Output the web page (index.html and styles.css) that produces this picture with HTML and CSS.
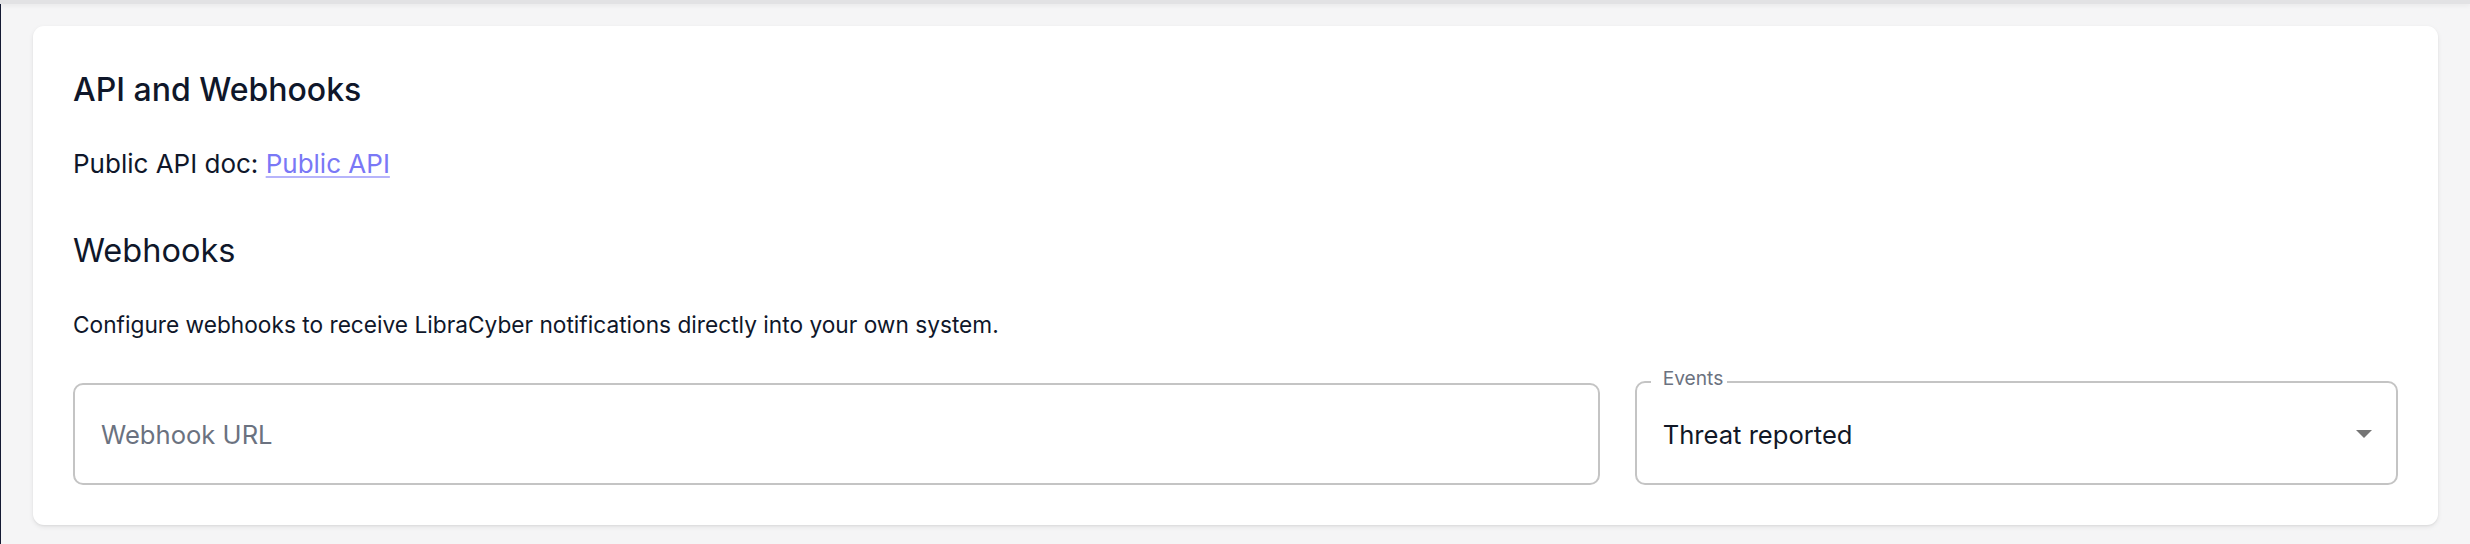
FILE: index.html
```html
<!DOCTYPE html>
<html lang="en">
<head>
  <meta charset="UTF-8" />
  <title>Settings - API and Webhooks</title>
  <meta name="viewport" content="width=device-width, initial-scale=1.0" />
  <link rel="stylesheet" href="styles.css">
</head>
<body>
  <div class="topbar"></div>
  <main class="main">
    <section class="card">
      <h1 class="card-title">API and Webhooks</h1>
      <p class="api-doc">Public API doc: <a href="#">Public API</a></p>

      <!-- webhooks -->
      <h2 class="section-title">Webhooks</h2>
      <p class="section-desc">Configure webhooks to receive LibraCyber notifications directly into your own system.</p>

      <div class="fields">
        <div class="field">
          <input type="text" placeholder="Webhook URL" />
        </div>
        <div class="field select">
          <fieldset><legend>Events</legend></fieldset>
          <span class="label">Events</span>
          <span class="value">Threat reported</span>
          <svg class="arrow" width="16" height="8" viewBox="0 0 16 8"><path d="M0 0h16L8 8z" fill="#757575"/></svg>
        </div>
      </div>
    </section>
  </main>
</body>
</html>
```

FILE: styles.css
```css
body { margin:0; background:#f5f5f6; font-family:Inter,'Noto Sans',sans-serif; color:#0f172a; }
.topbar { height:4px; background:#e2e2e4; box-shadow:0 2px 4px rgba(0,0,0,0.05); }
.main { border-left:1px solid #141a33; padding:22px 32px 40px 32px; min-height:500px; }

/* card */
.card { background:#fff; border-radius:11px; padding:40px 40px 40px 40px; box-shadow:0 2px 5px rgba(0,0,0,0.08), 0 1px 2px rgba(0,0,0,0.05); }
.card-title { margin:0; font-size:32px; line-height:48px; font-weight:500; }
.api-doc { margin:30px 0 0; font-size:26px; line-height:39px; }
.api-doc a { color:#7a78f6; text-decoration-color:#b6b4fb; text-underline-offset:3px; }
.section-title { margin:44px 0 0; font-size:32.5px; line-height:48px; font-weight:400; }
.section-desc { margin:33px 0 0; font-size:22.7px; line-height:34px; }

/* fields */
.fields { display:grid; grid-template-columns:2fr 1fr; gap:35px; margin-top:41px; }
.field { position:relative; height:102px; }
.field input { box-sizing:border-box; width:100%; height:100%; border:2px solid #c4c4c4; border-radius:10px; padding:0 26px; font-family:inherit; font-size:25.6px; color:#111827; outline:none; }
.field input::placeholder { color:#6b7280; }
.select { display:flex; align-items:center; padding:0 26px 0 28px; }
.select fieldset { position:absolute; inset:-11px 0 0 0; margin:0; padding:0 14px; border:2px solid #c4c4c4; border-radius:10px; pointer-events:none; }
.select legend { padding:0 8px; font-size:19.2px; line-height:20px; visibility:hidden; }
.select .label { position:absolute; left:28px; top:-18px; font-size:19.2px; line-height:26px; color:#6b7280; }
.select .value { flex:1; font-size:25.6px; color:#111827; }
```
